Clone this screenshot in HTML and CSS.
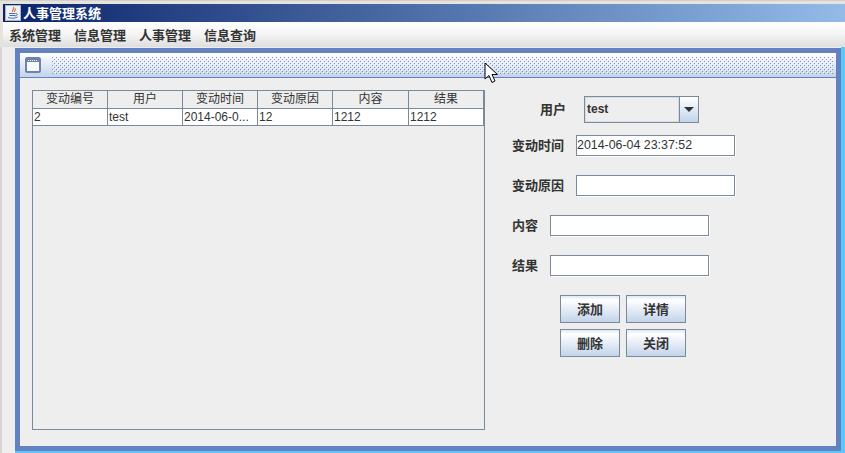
FILE: index.html
```html
<!DOCTYPE html>
<html lang="en">
  <head>
    <meta charset="UTF-8" />
    <title>人事管理系统</title>
    <link rel="stylesheet" href="styles.css">
  </head>
  <body>
    <div class="app">
      <div class="titlebar">
        <svg class="java_icon" width="16" height="16" viewBox="0 0 16 16">
          <rect x="0.5" y="0.5" width="15" height="15" fill="#eef1f8" stroke="#a9b4d0" />
          <path d="M8.500 2c1.500 2-2 3-1 5M10.500 3.500c.5 1.500-1.500 2-1 3.500" fill="none" stroke="#d8702a" stroke-width="1.200" />
          <path d="M4 8.500h6.500M4.500 10.500h5.500M3 12.500c3 1 7 1 9.500-.5M10.500 8.500c2.500-.5 2.500 2-.5 2.500" fill="none" stroke="#4a6aa8" />
        </svg>
        <span>人事管理系统</span>
      </div>
      <div class="menubar">
        <span>系统管理</span>
        <span>信息管理</span>
        <span>人事管理</span>
        <span>信息查询</span>
      </div>
      <div class="desktop">
        <div class="frame">
          <div class="frame_title">
            <svg class="frame_icon" width="16" height="16" viewBox="0 0 16 16">
              <rect x="1" y="1" width="14" height="14" rx="1.500" fill="#f6f8fc" stroke="#6f83a6" stroke-width="2" />
              <rect x="2" y="2" width="12" height="3" fill="#6f83a6" />
              <path d="M3 3.500h10" stroke="#f6f8fc" stroke-dasharray="1 1" />
            </svg>
            <svg class="bumps" width="100%" height="17">
              <defs>
                <pattern id="dots" width="4" height="4" patternUnits="userSpaceOnUse">
                  <rect x="0" y="0" width="1" height="1" fill="#7c93c6" />
                  <rect x="2" y="2" width="1" height="1" fill="#7c93c6" />
                  <rect x="1" y="1" width="1" height="1" fill="#ffffff" />
                  <rect x="3" y="3" width="1" height="1" fill="#ffffff" />
                </pattern>
              </defs>
              <rect width="100%" height="17" fill="url(#dots)" />
            </svg>
          </div>
          <div class="frame_body">
            <div class="table_box">
              <table>
                <thead>
                  <tr>
                    <th>变动编号</th>
                    <th>用户</th>
                    <th>变动时间</th>
                    <th>变动原因</th>
                    <th>内容</th>
                    <th>结果</th>
                  </tr>
                </thead>
                <tbody>
                  <tr>
                    <td>2</td>
                    <td>test</td>
                    <td>2014-06-0...</td>
                    <td>12</td>
                    <td>1212</td>
                    <td>1212</td>
                  </tr>
                </tbody>
              </table>
            </div>
            <div class="form">
              <div class="row row_user">
                <label>用户</label>
                <div class="combo">
                  <span class="combo_value">test</span>
                  <span class="combo_btn"><i class="arrow"></i></span>
                </div>
              </div>
              <div class="row row_wide">
                <label>变动时间</label>
                <div class="field">2014-06-04 23:37:52</div>
              </div>
              <div class="row row_wide">
                <label>变动原因</label>
                <div class="field"></div>
              </div>
              <div class="row row_short">
                <label>内容</label>
                <div class="field"></div>
              </div>
              <div class="row row_short">
                <label>结果</label>
                <div class="field"></div>
              </div>
              <div class="buttons">
                <button>添加</button>
                <button>详情</button>
                <button>删除</button>
                <button>关闭</button>
              </div>
            </div>
          </div>
        </div>
      </div>
    </div>
    <svg class="cursor" width="16" height="24" viewBox="0 0 16 24">
      <path d="M1 1v16l4-3.500 3 7 3-1.500-3-6.500h5.500z" fill="#fff" stroke="#000" />
    </svg>
  </body>
</html>
```
FILE: styles.css
```css
* {
  box-sizing: border-box;
  padding: 0;
  margin: 0;
}
html,
body {
  width: 845px;
  height: 453px;
  overflow: hidden;
}
body {
  font-family: "Liberation Sans", "Noto Sans CJK SC", sans-serif;
  font-size: 12px;
  color: #333;
  background-color: #eee;
}
.app {
  display: flex;
  flex-direction: column;
  height: 100%;
  padding-top: 3px;
  border-top: 1px solid #d4d0c8;
  background-color: #e6e3de;
}
.titlebar {
  display: flex;
  align-items: center;
  gap: 2px;
  height: 18px;
  margin-left: 3px;
  padding-left: 2px;
  padding-bottom: 1px;
  color: #fff;
  font-size: 13px;
  font-weight: bold;
  background: linear-gradient(to right, #0a246a, #93bbe8);
}
.menubar {
  display: flex;
  gap: 13px;
  height: 25px;
  align-items: center;
  margin-left: 3px;
  padding-left: 6px;
  font-size: 13px;
  font-weight: bold;
  background: linear-gradient(#fff, #f4f4f4 50%, #dedede);
}
.desktop {
  flex: 1;
  display: flex;
  padding: 1px 4px 2px 13px;
  border-left: 2px solid #d8d4d0;
  background:
    linear-gradient(#5ac8fa, #5ac8fa) right / 4px 100% no-repeat,
    linear-gradient(#5ac8fa, #5ac8fa) right bottom / 830px 2px no-repeat,
    #eee;
}
.frame {
  flex: 1;
  display: flex;
  flex-direction: column;
  border: 5px solid #6382bf;
}
.frame_title {
  display: flex;
  align-items: center;
  gap: 11px;
  height: 25px;
  padding: 0 3px 0 5px;
  border-bottom: 1px solid #6382bf;
  background: linear-gradient(#fff, #c3d3ea);
}
.bumps {
  flex: 1;
}
.frame_body {
  flex: 1;
  display: flex;
  padding: 12px 0 16px 12px;
  background-color: #eee;
}
.table_box {
  width: 453px;
  border: 1px solid #7a8a99;
}
table {
  width: 451px;
  border-collapse: separate;
  border-spacing: 0;
  table-layout: fixed;
  line-height: 14px;
}
th {
  width: 75px;
  height: 18px;
  padding-bottom: 1px;
  font-weight: normal;
  text-align: center;
  border-right: 1px solid #7a8a99;
  border-bottom: 1px solid #7a8a99;
  background-color: #eee;
}
th:nth-child(5) {
  width: 76px;
}
td {
  height: 17px;
  padding-left: 1px;
  background-color: #fff;
  border-right: 1px solid #7a8a99;
  border-bottom: 1px solid #7a8a99;
  white-space: nowrap;
}
.form {
  display: flex;
  flex-direction: column;
  margin-left: 27px;
  padding-top: 6px;
}
.row {
  display: flex;
  align-items: center;
  height: 21px;
  margin-bottom: 19px;
}
.row label {
  padding-bottom: 2px;
  font-size: 13px;
  font-weight: bold;
}
.row_user {
  height: 27px;
  margin-bottom: 12px;
  padding-left: 28px;
}
.row_user label {
  width: 44px;
}
.row_wide label {
  width: 64px;
}
.row_short label {
  width: 38px;
}
.combo {
  display: flex;
  width: 115px;
  height: 27px;
  border: 1px solid #7a8a99;
}
.combo_value {
  flex: 1;
  padding-left: 1px;
  line-height: 22px;
  font-weight: bold;
  border: 1px solid #d6dde8;
  background-color: #eee;
}
.combo_btn {
  display: flex;
  align-items: center;
  justify-content: center;
  width: 19px;
  border-left: 1px solid #7a8a99;
  background: linear-gradient(#fff, #c3d3ea);
}
.arrow {
  width: 0;
  height: 0;
  border-left: 5px solid transparent;
  border-right: 5px solid transparent;
  border-top: 5px solid #333;
}
.field {
  width: 159px;
  height: 21px;
  line-height: 19px;
  font-size: 12.4px;
  background-color: #fff;
  border: 1px solid #7a8a99;
  box-shadow: 1px 1px 0 #fff;
}
.buttons {
  display: grid;
  grid-template-columns: 60px 60px;
  grid-auto-rows: 28px;
  gap: 6px;
  margin-left: 48px;
}
button {
  padding-bottom: 2px;
  font-family: inherit;
  font-size: 13px;
  font-weight: bold;
  color: #333;
  border: 1px solid #7a8a99;
  background: linear-gradient(#dde8f3, #fff 15%, #c3d3ea);
}
.cursor {
  position: absolute;
  left: 484px;
  top: 62px;
}
```
